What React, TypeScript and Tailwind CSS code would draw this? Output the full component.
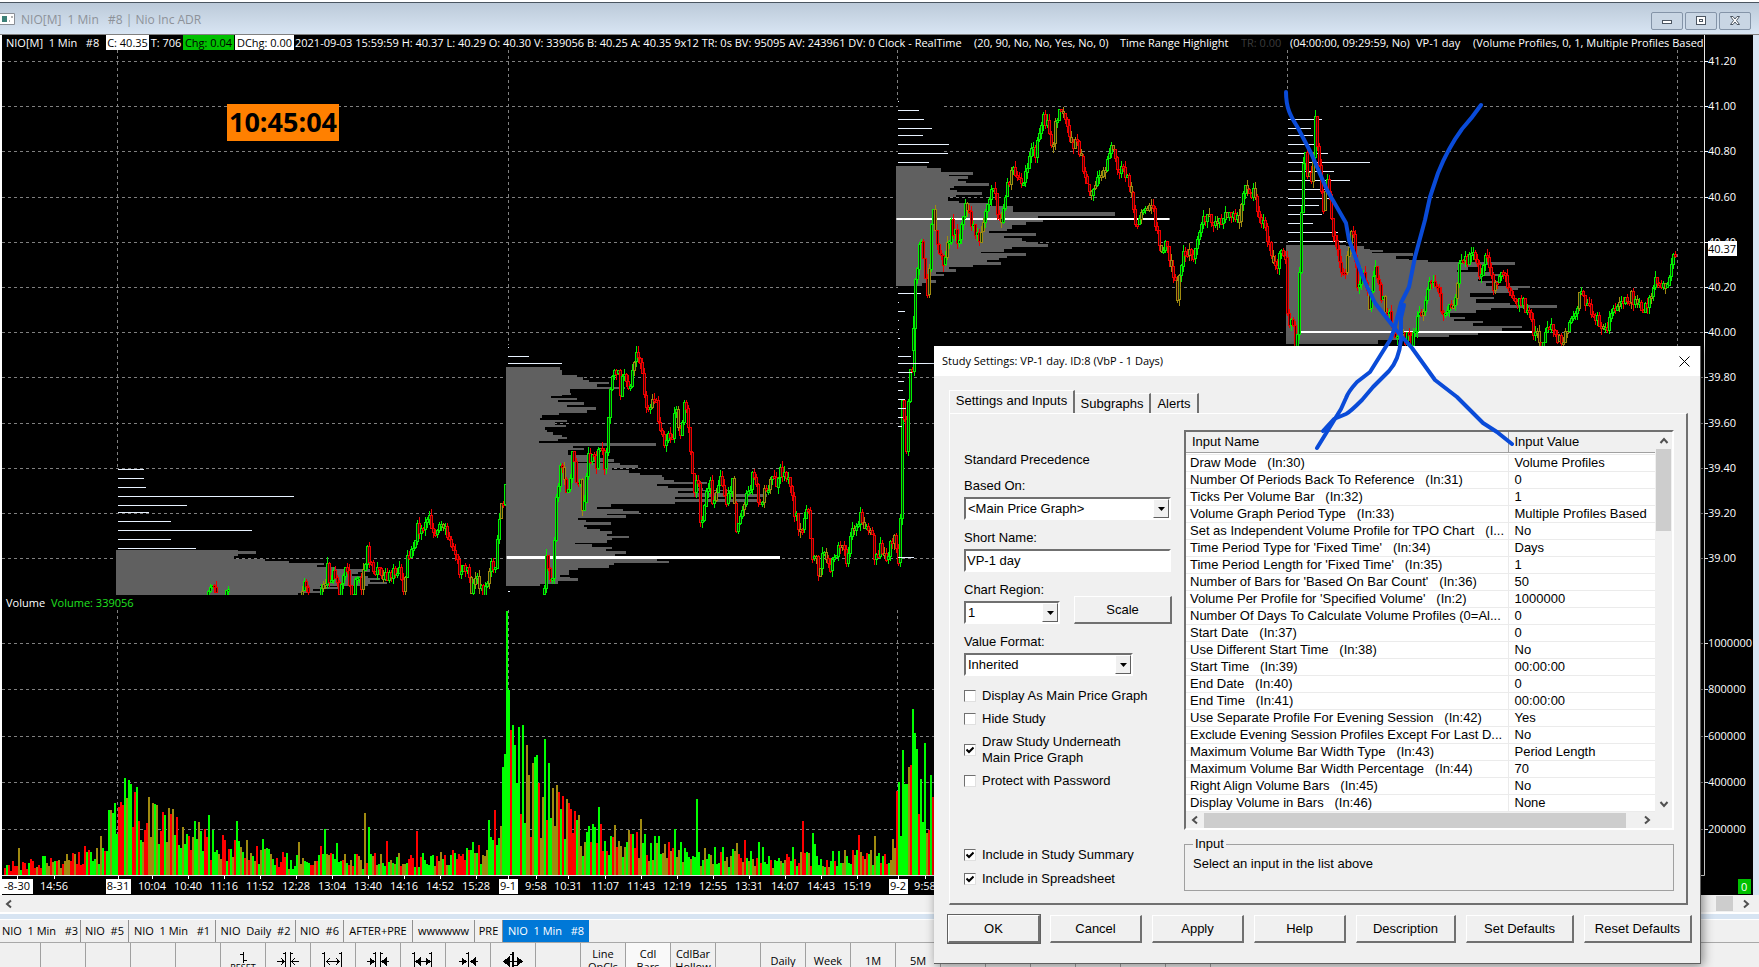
import { useId } from "react";
import type { ReactNode } from "react";

type Point = [number, number];

// Sessions were digitised separately, each one with its own origin and scale
interface Session {
    origin: Point;
    scale: Point;
    base: number;
    profile: Point[];
    profileEnd: number;
    lineStart: number;
    lines: Point[];
    poc?: [number, number, number];
    path: Point[][];
}

const SESSIONS: Session[] = [
    {
        origin: [0, 440],
        scale: [3, 3],
        base: 348,
        profile: [[330, 715], [334, 768], [342, 715], [348, 702], [356, 795], [362, 868], [368, 972], [376, 950], [382, 1005], [388, 1110], [396, 1075], [402, 1055], [408, 1105], [414, 1140], [420, 1110], [426, 1160], [432, 1105], [438, 960], [442, 1020], [448, 940], [452, 960], [460, 893]],
        profileEnd: 465,
        lineStart: 354,
        lines: [[88, 432], [115, 432], [142, 438], [169, 882], [196, 560], [217, 447], [244, 513], [271, 755], [298, 513], [325, 588]],
        path: [
            [[625, 470], [629, 420], [636, 455], [645, 440], [652, 470]],
            [[678, 470], [683, 440], [690, 470]],
            [[905, 470], [914, 440], [922, 458], [926, 470]],
            [[963, 470], [968, 420], [975, 430], [984, 378], [990, 430], [1003, 400], [1022, 460], [1030, 395], [1042, 400], [1055, 470], [1070, 410], [1087, 445], [1093, 370], [1103, 325], [1120, 400], [1135, 375], [1148, 430], [1157, 395], [1168, 410], [1185, 385], [1198, 390], [1213, 445], [1220, 355], [1245, 330], [1253, 260], [1270, 280], [1288, 220], [1308, 300], [1320, 260], [1337, 260], [1352, 330], [1368, 345], [1380, 395], [1402, 375], [1412, 450], [1430, 410], [1452, 468], [1471, 365], [1483, 410], [1492, 300], [1503, 170], [1512, 180], [1520, 95]],
        ],
    },
    {
        origin: [490, 330],
        scale: [3, 3],
        base: 48,
        profile: [[111, 210], [120, 215], [134, 262], [142, 280], [149, 297], [156, 357], [163, 320], [170, 405], [177, 240], [188, 242], [194, 215], [199, 183], [203, 262], [211, 205], [217, 282], [225, 230], [231, 317], [240, 290], [248, 207], [255, 155], [264, 150], [270, 230], [277, 195], [284, 228], [292, 165], [299, 172], [307, 188], [314, 215], [320, 230], [328, 205], [333, 147], [339, 497], [348, 250], [355, 283], [361, 235], [374, 305], [384, 355], [388, 372], [395, 265], [399, 390], [406, 443], [414, 365], [420, 418], [428, 450], [434, 515], [442, 522], [449, 553], [455, 650], [462, 502], [467, 533], [474, 640], [479, 730], [484, 565], [488, 700], [493, 830], [502, 555], [507, 800], [515, 555], [522, 362], [531, 320], [537, 400], [542, 447], [551, 352], [556, 407], [563, 265], [571, 288], [577, 362], [584, 283], [592, 290], [598, 330], [604, 365], [611, 350], [617, 417], [624, 365], [631, 350], [638, 255], [643, 305], [650, 365], [658, 348], [664, 407], [672, 375], [687, 500], [692, 537], [699, 372], [706, 358], [713, 265], [721, 237], [734, 210], [741, 240], [745, 263], [752, 205], [763, 150]],
        profileEnd: 768,
        lineStart: 54,
        lines: [[52, 57], [79, 117], [100, 216], [784, 60]],
        poc: [50, 870, 682],
        path: [
            [[163, 792], [170, 670], [187, 765], [200, 500], [215, 400], [235, 500], [250, 350], [262, 500], [270, 450], [280, 560], [297, 370], [318, 400], [333, 350], [348, 430], [353, 280], [360, 190], [375, 120], [385, 105], [392, 190], [403, 120], [415, 190], [440, 75], [455, 100], [470, 250], [485, 200], [500, 230], [515, 300], [522, 350], [535, 300], [545, 335], [555, 230], [573, 320], [583, 225], [592, 240], [605, 400], [612, 480], [625, 450], [630, 595], [645, 520], [660, 450], [672, 535], [692, 425], [703, 500], [720, 500], [729, 435], [740, 615], [755, 540], [775, 490], [792, 420], [805, 520], [825, 490], [850, 420], [860, 490], [872, 420], [897, 435], [915, 560], [935, 600], [955, 520], [968, 710], [977, 670], [988, 745], [1000, 660], [1022, 715], [1040, 660], [1058, 630], [1070, 715], [1085, 600], [1100, 600], [1115, 545], [1127, 600], [1147, 600], [1155, 690], [1175, 650], [1190, 680], [1212, 620], [1222, 670], [1228, 740], [1234, 460], [1238, 180], [1250, 390], [1260, 100], [1266, 170], [1271, 0], [1275, -40]],
        ],
    },
    {
        origin: [880, 90],
        scale: [1.889, 3],
        base: 30,
        profile: [[228, 88], [233, 115], [246, 175], [254, 130], [259, 167], [266, 148], [273, 163], [279, 205], [288, 140], [294, 133], [300, 145], [306, 193], [314, 143], [321, 128], [333, 150], [340, 207], [347, 252], [366, 443], [378, 298], [390, 307], [397, 275], [404, 250], [416, 240], [423, 205], [430, 294], [438, 235], [445, 268], [452, 275], [457, 298], [463, 317], [471, 250], [478, 235], [485, 190], [490, 275], [498, 240], [504, 225], [510, 202], [517, 228], [525, 175], [532, 130], [538, 143], [545, 105], [551, 120], [558, 95], [570, 105], [578, 80]],
        profileEnd: 588,
        lineStart: 34,
        lines: [[34, 36], [61, 73], [88, 84], [115, 99], [136, 82], [163, 131], [190, 129], [217, 93], [610, 78], [637, 36], [664, 48], [691, 36], [718, 36], [745, 38], [772, 36], [799, 58], [820, 118], [847, 60], [874, 46], [901, 44], [928, 48], [955, 50], [982, 44], [1009, 42], [1402, 64]],
        poc: [31, 547, 386],
        path: [
            [[62, 780], [66, 600], [78, 430], [90, 610], [100, 350], [110, 490], [122, 530], [135, 400], [150, 460], [162, 320], [180, 440], [192, 435], [203, 340], [215, 290], [228, 420], [237, 310], [250, 240], [272, 280], [287, 160], [292, 195], [308, 90], [318, 100], [325, 170], [338, 50], [352, 85], [362, 150], [380, 180], [388, 270], [397, 310], [412, 270], [427, 250], [435, 170], [450, 230], [470, 260], [483, 400], [500, 370], [515, 345], [530, 470], [543, 450], [550, 540], [562, 610], [575, 480], [592, 500], [605, 410], [622, 370], [637, 410], [660, 370], [680, 380], [690, 295], [703, 300], [725, 400], [748, 540], [758, 460], [768, 510]],
        ],
    },
    {
        origin: [880, 90],
        scale: [1.889, 3],
        base: 767,
        profile: [[465, 880], [469, 915], [476, 925], [480, 950], [486, 930], [490, 1007], [497, 975], [506, 1000], [511, 1035], [517, 1200], [524, 1130], [532, 1110], [540, 1090], [547, 1160], [552, 1185], [559, 1135], [568, 1130], [573, 1170], [580, 1145], [587, 1227], [594, 1205], [601, 1190], [608, 1115], [620, 1160], [628, 1125], [640, 1190], [646, 1278], [654, 1155], [661, 1125], [670, 1075], [680, 1105], [687, 1085], [694, 1140], [700, 1120], [707, 1212], [714, 1175], [728, 1130], [735, 1075], [742, 1010], [750, 940]],
        profileEnd: 762,
        lineStart: 771,
        lines: [[88, 834], [115, 815], [136, 818], [163, 825], [190, 847], [217, 925], [244, 858], [271, 887], [298, 840], [325, 858], [346, 830], [373, 835], [400, 817], [427, 865], [454, 880]],
        poc: [790, 1245, 725],
        path: [
            [[768, 500], [770, 700], [780, 690], [784, 762], [789, 740], [795, 400], [802, 130], [807, 280], [812, 250], [816, 280], [822, 85], [830, 230], [836, 370], [845, 260], [857, 440], [877, 560], [893, 400], [902, 600], [912, 540], [925, 640], [935, 520], [945, 600], [955, 650], [975, 730], [990, 740], [1005, 750], [1015, 680], [1025, 660], [1040, 550], [1052, 600], [1065, 670], [1085, 640], [1095, 530], [1120, 500], [1135, 545], [1145, 480], [1160, 600], [1178, 530], [1198, 640], [1215, 630], [1235, 720], [1250, 750], [1265, 710], [1288, 755], [1300, 700], [1318, 650], [1322, 600], [1345, 660], [1370, 715], [1388, 655], [1405, 640], [1420, 620], [1443, 670], [1465, 570], [1485, 595], [1495, 520], [1506, 480]],
        ],
    },
];

const PRICES = ["41.20", "41.00", "40.80", "40.60", "40.40", "40.20", "40.00", "39.80", "39.60", "39.40", "39.20", "39.00"];
const VOLUMES = ["1000000", "800000", "600000", "400000", "200000"];
const SESSION_X = [117, 508, 897, 1287, 1677];

const TIMES: [number, string, boolean?][] = [
    [17, "-8-30", true], [54, "14:56"], [118, "8-31", true], [152, "10:04"], [188, "10:40"], [224, "11:16"], [260, "11:52"],
    [296, "12:28"], [332, "13:04"], [368, "13:40"], [404, "14:16"], [440, "14:52"], [476, "15:28"], [508, "9-1", true],
    [536, "9:58"], [568, "10:31"], [605, "11:07"], [641, "11:43"], [677, "12:19"], [713, "12:55"], [749, "13:31"],
    [785, "14:07"], [821, "14:43"], [857, "15:19"], [898, "9-2", true], [925, "9:58"],
];

// Envelope of the volume histogram: x, height
const VOLUME_ENVELOPE: Point[] = [[4, 12], [60, 18], [105, 24], [113, 75], [130, 82], [150, 62], [180, 48], [205, 44], [240, 28], [290, 18], [400, 18], [440, 20], [480, 30], [498, 55], [505, 160], [515, 140], [530, 105], [560, 70], [590, 48], [640, 38], [700, 26], [780, 18], [850, 24], [885, 24], [893, 40], [900, 110], [915, 115], [934, 90]];
const VOLUME_SPIKES: Point[] = [[108, 65], [118, 68], [128, 95], [136, 88], [148, 78], [172, 66], [208, 60], [236, 54], [262, 36], [324, 46], [364, 62], [368, 48], [416, 44], [507, 264], [509, 185], [513, 150], [518, 148], [522, 150], [526, 130], [532, 112], [537, 120], [544, 136], [548, 112], [556, 90], [566, 76], [598, 68], [640, 56], [674, 46], [696, 76], [736, 32], [802, 54], [812, 42], [896, 84], [902, 125], [912, 166], [914, 142], [924, 132], [930, 100]];

const INPUTS = [
    ["Draw Mode   (In:30)", "Volume Profiles"],
    ["Number Of Periods Back To Reference   (In:31)", "0"],
    ["Ticks Per Volume Bar   (In:32)", "1"],
    ["Volume Graph Period Type   (In:33)", "Multiple Profiles Based"],
    ["Set as Independent Volume Profile for TPO Chart   (I...", "No"],
    ["Time Period Type for 'Fixed Time'   (In:34)", "Days"],
    ["Time Period Length for 'Fixed Time'   (In:35)", "1"],
    ["Number of Bars for 'Based On Bar Count'   (In:36)", "50"],
    ["Volume Per Profile for 'Specified Volume'   (In:2)", "1000000"],
    ["Number Of Days To Calculate Volume Profiles (0=Al...", "0"],
    ["Start Date   (In:37)", "0"],
    ["Use Different Start Time   (In:38)", "No"],
    ["Start Time   (In:39)", "00:00:00"],
    ["End Date   (In:40)", "0"],
    ["End Time   (In:41)", "00:00:00"],
    ["Use Separate Profile For Evening Session   (In:42)", "Yes"],
    ["Exclude Evening Session Profiles Except For Last D...", "No"],
    ["Maximum Volume Bar Width Type   (In:43)", "Period Length"],
    ["Maximum Volume Bar Width Percentage   (In:44)", "70"],
    ["Right Align Volume Bars   (In:45)", "No"],
    ["Display Volume in Bars   (In:46)", "None"],
];

const GREEN = "#00f000";
const RED = "#f00000";
const OLIVE = "#a08a10";

function random(seed: number) {
    let s = seed;
    return () => {
        s = (s * 1664525 + 1013904223) % 4294967296;
        return s / 4294967296;
    };
}

function valueAt(points: Point[], x: number) {
    for (let i = 1; i < points.length; i++) {
        const [x0, y0] = points[i - 1];
        const [x1, y1] = points[i];
        if (x <= x1) return y0 + ((y1 - y0) * (x - x0)) / (x1 - x0 || 1);
    }
    return points[points.length - 1][1];
}

function Candles({ points, seed }: { points: Point[]; seed: number }) {
    const rnd = random(seed);
    const bars: ReactNode[] = [];
    const end = points[points.length - 1][0];
    let prev = points[0][1];
    for (let x = Math.round(points[0][0]) + 0.5; x <= end; x += 2) {
        const next = valueAt(points, x) + (rnd() - 0.5) * 13;
        const up = next < prev;
        const color = rnd() < 0.12 ? OLIVE : up ? GREEN : RED;
        const top = Math.round(Math.min(prev, next)) + 0.5;
        const height = Math.max(2, Math.round(Math.abs(next - prev)));
        bars.push(
            <path key={x} d={`M${x} ${top - rnd() * 7}V${top}M${x} ${top + height}v${rnd() * 7}`} stroke={color} />,
            <rect key={`b${x}`} x={x - 1} y={top} width={2} height={height} stroke={color} fill={up ? "#063806" : "#400606"} />
        );
        prev = next;
    }
    return <g shapeRendering="crispEdges">{bars}</g>;
}

function SessionPlot({ session, index }: { session: Session; index: number }) {
    const px = (x: number) => session.origin[0] + x / session.scale[0];
    const py = (y: number) => session.origin[1] + y / session.scale[1];
    const left = px(session.base);
    const { profile } = session;

    return (
        <g>
            {profile.map(([y, x], i) => {
                const next = i + 1 < profile.length ? profile[i + 1][0] : session.profileEnd;
                return <rect key={y} x={left} y={py(y)} width={px(x) - left} height={py(next) - py(y)} fill="#606060" shapeRendering="crispEdges" />;
            })}
            {session.lines.map(([y, x]) => (
                <rect key={y} x={px(session.lineStart)} y={Math.floor(py(y))} width={Math.max(1, px(x) - px(session.lineStart))} height={1} fill="#e8f2ff" shapeRendering="crispEdges" />
            ))}
            {session.poc && (
                <rect x={px(session.poc[0])} y={Math.round(py(session.poc[2])) - 1} width={px(session.poc[1]) - px(session.poc[0])} height={index === 1 ? 3 : 2} fill="#fff" />
            )}
            {session.path.map((path, i) => (
                <Candles key={i} seed={index * 31 + i * 7 + 5} points={path.map(([x, y]) => [px(x), py(y)] as Point)} />
            ))}
        </g>
    );
}

function VolumeBars() {
    const rnd = random(77);
    const bars: ReactNode[] = [];
    for (let x = 4; x < 938; x += 2) {
        const env = valueAt(VOLUME_ENVELOPE, x);
        const spike = VOLUME_SPIKES.find(([sx]) => sx === x || sx === x + 1);
        const h = spike ? spike[1] : env * (0.35 + rnd() * 0.85) + (rnd() < 0.08 ? 12 : 0);
        const c = rnd();
        const color = c < 0.46 || (spike && spike[1] > 140) ? "#00ff00" : c < 0.74 ? "#ff0000" : OLIVE;
        bars.push(<rect key={x} x={x} y={875 - h} width={2} height={h} fill={color} />);
    }
    return <g shapeRendering="crispEdges">{bars}</g>;
}

function Chart() {
    return (
        <svg className="block h-full w-full font-['Open_Sans',sans-serif] text-[11px]" viewBox="2 35 1751 860" preserveAspectRatio="xMinYMin slice" role="img" aria-label="NIO 1 minute chart">
            <defs>
                <clipPath id="price">
                    <rect x="2" y="50" width="1702" height="545" />
                </clipPath>
            </defs>
            <rect x="2" y="35" width="1751" height="860" fill="#000" />
            <g stroke="#808080" strokeDasharray="3 3" shapeRendering="crispEdges">
                {PRICES.map((p, i) => (
                    <line key={p} x1="2" x2="1704" y1={Math.round(61 + i * 45.2) + 0.5} y2={Math.round(61 + i * 45.2) + 0.5} />
                ))}
                {VOLUMES.map((v, i) => (
                    <line key={v} x1="2" x2="1704" y1={Math.round(643 + i * 46.4) + 0.5} y2={Math.round(643 + i * 46.4) + 0.5} />
                ))}
                {SESSION_X.map((x, i) => (
                    <g key={x}>
                        <line x1={x + 0.5} x2={x + 0.5} y1="50" y2={[467, 345, 100, 90, 595][i]} />
                        <line x1={x + 0.5} x2={x + 0.5} y1="610" y2="875" />
                    </g>
                ))}
            </g>
            {/* Grid is blanked beside the thin profile rows */}
            <path d="M898 95H944V340H898ZM1288 95H1338V245H1288Z" />
            <g clipPath="url(#price)">
                {SESSIONS.map((s, i) => (
                    <SessionPlot key={i} session={s} index={i} />
                ))}
            </g>
            <VolumeBars />

            {/* Axes */}
            <path d="M2 875.5H1704.5V35" stroke="#e8e8e8" fill="none" />
            {PRICES.map((p, i) => (
                <g key={p} fill="#fff">
                    <rect x="1704" y={Math.round(61 + i * 45.2)} width="4" height="1" />
                    <text x="1708" y={Math.round(65 + i * 45.2)}>{p}</text>
                </g>
            ))}
            {VOLUMES.map((v, i) => (
                <g key={v} fill="#fff">
                    <rect x="1704" y={Math.round(643 + i * 46.4)} width="4" height="1" />
                    <text x="1708" y={Math.round(647 + i * 46.4)}>{v}</text>
                </g>
            ))}
            <rect x="1708" y="241" width="29" height="15" fill="#fff" />
            <text x="1708" y="253">40.37</text>
            <rect x="1738" y="879" width="13" height="15" fill="#00c000" />
            <text x="1741" y="891" fill="#fff">0</text>
            {TIMES.map(([x, label, boxed]) => (
                <g key={x}>
                    <rect x={x} y="876" width="1" height="3" fill="#fff" />
                    {boxed && <rect x={x - label.length * 3} y="879" width={label.length * 6 + 1} height="15" fill="#fff" />}
                    <text x={x} y="890" textAnchor="middle" fill={boxed ? "#000" : "#fff"}>{label}</text>
                </g>
            ))}
        </svg>
    );
}

function StatusLine() {
    return (
        <div className="absolute top-0 left-0 flex h-[15px] w-[1702px] items-center overflow-hidden bg-black pl-1 text-[11px] leading-[15px] whitespace-pre text-white">
            <span className="w-[100px] shrink-0">NIO[M]  1 Min   #8</span>
            <span className="w-[43px] shrink-0 bg-white text-center text-black">C: 40.35</span>
            <span className="w-[34px] shrink-0 text-center">T: 706</span>
            <span className="w-[51px] shrink-0 bg-[#00c000] text-center text-black">Chg: 0.04</span>
            <span className="ml-px w-[59px] shrink-0 bg-white text-center text-black">DChg: 0.00</span>
            <span className="w-[584px] shrink-0 pl-px">2021-09-03 15:59:59 H: 40.37 L: 40.29 O: 40.30 V: 339056 B: 40.25 A: 40.35 9x12 TR: 0s BV: 95095 AV: 243961 DV: 0</span>
            <span className="w-[96px] shrink-0">Clock - RealTime</span>
            <span className="w-[146px] shrink-0">(20, 90, No, No, Yes, No, 0)</span>
            <span className="w-[121px] shrink-0">Time Range Highlight</span>
            <span className="w-[49px] shrink-0 text-[#3c3c3c]">TR: 0.00</span>
            <span className="w-[126px] shrink-0">(04:00:00, 09:29:59, No)</span>
            <span className="w-[57px] shrink-0">VP-1 day</span>
            <span>(Volume Profiles, 0, 1, Multiple Profiles Based</span>
        </div>
    );
}

function WindowButton({ label, children }: { label: string; children: ReactNode }) {
    return (
        <button aria-label={label} className="flex h-[18px] w-8 items-center justify-center rounded-xs border border-[#8494a8] bg-[#c9d6e4]">
            <svg width="14" height="12" viewBox="0 0 14 12" fill="#fff" stroke="#4c5662">{children}</svg>
        </button>
    );
}

function ToolIcon({ kind }: { kind: number }) {
    return (
        <svg width="24" height="20" viewBox="0 0 24 20" fill="none" stroke="#000" strokeWidth="1" shapeRendering="crispEdges">
            {kind === 0 && <path d="M12.5 1V12M9 3.5H12M13 9.5H16" />}
            {kind === 1 && <path d="M9.5 1V18M14.5 1V18M7 2.5H9M15 2.5H17M1 10.5H8M16 10.5H23M5 7L8 10.5L5 14M19 7L16 10.5L19 14" />}
            {kind === 2 && <path d="M3.5 1V18M20.5 1V18M1 2.5H3M18 2.5H20M6 10.5H18M9 7L6 10.5L9 14M15 7L18 10.5L15 14" />}
            {kind === 3 && <path d="M9.5 1V18M14.5 1V18M7 2.5H9M15 2.5H17M1 10.5H8M16 10.5H23M4 7L8 10.5L4 14ZM20 7L16 10.5L20 14Z" fill="#000" />}
            {kind === 4 && <path d="M3.5 1V18M20.5 1V18M1 2.5H3M18 2.5H20M6 10.5H18M9 7L5 10.5L9 14ZM15 7L19 10.5L15 14Z" fill="#000" />}
            {kind === 5 && <path d="M12.5 1V18M10 2.5H12M3 10.5H10M15 10.5H22M6 7L10 10.5L6 14ZM19 7L15 10.5L19 14Z" fill="#000" />}
            {kind === 6 && <path d="M12.5 1V18M11.5 1V18M9 3.5H12M13 14.5H16M4 10.5H20M8 6L3 10.5L8 15ZM16 6L21 10.5L16 15Z" fill="#000" />}
        </svg>
    );
}

const TABS = [
    { label: "NIO  1 Min   #3", width: "w-[81px]" },
    { label: "NIO  #5", width: "w-[48px]" },
    { label: "NIO  1 Min   #1", width: "w-[87px]" },
    { label: "NIO  Daily  #2", width: "w-[80px]" },
    { label: "NIO  #6", width: "w-[48px]" },
    { label: "AFTER+PRE", width: "w-[69px]" },
    { label: "wwwwww", width: "w-[62px]" },
    { label: "PRE", width: "w-[28px]" },
];

const TOOLS: (string | number)[] = [
    "", "", "", "", "", 0, 1, 2, 3, 4, 5, 6, "", "Line\nOpCls", "Cdl\nBars", "CdlBar\nHollow", "",
    "Daily", "Week", "1M", "5M", "", "", "", "", "Move", "Range",
];

function BottomBars() {
    return (
        <>
            <div className="flex h-[17px] shrink-0 items-center justify-between bg-[#f0f0f0] pr-2 pl-1 text-[#555]">
                <Arrow direction="left" />
                <div className="flex h-full items-center gap-2">
                    <div className="h-[15px] w-[17px] bg-[#cdcdcd]" />
                    <Arrow direction="right" />
                </div>
            </div>
            <div className="h-2 shrink-0 border-t-2 border-b border-white bg-[#d7e4f2]" />
            <div className="flex h-[23px] shrink-0 items-start border-b border-[#a8a8a8] bg-[#f0f0f0] text-[11px] whitespace-pre">
                {TABS.map((t) => (
                    <button key={t.label} className={`${t.width} h-[22px] shrink-0 overflow-hidden border-r border-[#909090] text-center`}>{t.label}</button>
                ))}
                <button className="h-[22px] w-[86px] bg-[#0078d7] text-center text-white">NIO  1 Min   #8</button>
            </div>
            <div className="flex h-6 shrink-0 overflow-hidden bg-[#f0f0f0] text-[11px] leading-[13px]">
                {TOOLS.map((t, i) => (
                    <button
                        key={i}
                        className={`flex h-[34px] shrink-0 flex-col items-center border-r border-[#a0a0a0] whitespace-pre ${i === 0 ? "w-[41px]" : "w-[45px]"} ${t === "Cdl\nBars" ? "bg-[#f9f9f9]" : ""} ${typeof t === "number" ? "justify-start pt-2" : t === "Move" || t === "Range" ? "justify-end" : "justify-center"}`}
                    >
                        {typeof t === "number" ? <ToolIcon kind={t} /> : t}
                        {t === 0 && <span className="-mt-2 text-[9px] leading-[9px]">RESET</span>}
                    </button>
                ))}
            </div>
        </>
    );
}

function Arrow({ direction }: { direction: "left" | "right" | "up" | "down" }) {
    const d = {
        left: "M7 1.5L3 5L7 8.5",
        right: "M3 1.5L7 5L3 8.5",
        up: "M1.5 7L5 3L8.5 7",
        down: "M1.5 3L5 7L8.5 3",
    }[direction];
    return (
        <svg width="10" height="10" viewBox="0 0 10 10" fill="none" stroke="#505050" strokeWidth="2">
            <path d={d} />
        </svg>
    );
}

function Select({ label, value, width }: { label: string; value: string; width: string }) {
    const id = useId();
    return (
        <div className="flex flex-col">
            <label htmlFor={id} className="h-[23px] leading-[23px]">{label}</label>
            <div className={`relative h-[23px] border-2 border-t-[#707070] border-r-white border-b-white border-l-[#707070] bg-white ${width}`}>
                <select id={id} className="block h-full w-full appearance-none pl-0.5 leading-[19px] outline-none">
                    <option>{value}</option>
                </select>
                <span className="pointer-events-none absolute top-0 right-0 flex h-[19px] w-4 items-center justify-center border border-t-white border-r-[#606060] border-b-[#606060] border-l-white bg-[#f0f0f0]">
                    <svg width="7" height="4" viewBox="0 0 7 4"><path d="M0 0H7L3.5 4Z" /></svg>
                </span>
            </div>
        </div>
    );
}

function Checkbox({ checked, children }: { checked?: boolean; children: ReactNode }) {
    return (
        <label className="flex items-center gap-1.5">
            <span className="grid size-3 place-items-center">
                <input type="checkbox" defaultChecked={checked} className="peer col-start-1 row-start-1 size-3 appearance-none border border-t-[#707070] border-r-[#e0e0e0] border-b-[#e0e0e0] border-l-[#707070] bg-white" />
                <svg className="pointer-events-none invisible col-start-1 row-start-1 peer-checked:visible" width="8" height="8" viewBox="0 0 8 8" fill="none" stroke="#000" strokeWidth="2">
                    <path d="M0.5 3.5L3 6L7.5 1.5" />
                </svg>
            </span>
            <span>{children}</span>
        </label>
    );
}

function Button({ children, className }: { children: ReactNode; className: string }) {
    return (
        <button className={`h-7 shrink-0 border border-t-white border-r-2 border-r-[#707070] border-b-2 border-b-[#707070] border-l-white text-center ${className}`}>{children}</button>
    );
}

function InputList() {
    return (
        <div className="h-[400px] border-2 border-t-[#707070] border-r-white border-b-white border-l-[#707070] bg-white">
            <div className="flex h-[380px]">
                <table className="w-full table-fixed border-collapse text-left whitespace-pre">
                    <colgroup>
                        <col className="w-[322px]" />
                        <col />
                    </colgroup>
                    <thead className="bg-[#f0f0f0]">
                        <tr className="h-5 border-b border-[#a0a0a0] leading-[19px]">
                            <th className="border-r border-[#a0a0a0] p-0 pl-1.5 font-normal">Input Name</th>
                            <th className="p-0 pl-1.5 font-normal">Input Value</th>
                        </tr>
                    </thead>
                    <tbody>
                        <tr className="h-0.5 border-b border-[#ebebeb]"><td colSpan={2} className="p-0" /></tr>
                        {INPUTS.map(([name, value]) => (
                            <tr key={name} className="h-[17px] border-b border-[#ebebeb] leading-4">
                                <td className="border-r border-[#ebebeb] p-0 pl-1">{name}</td>
                                <td className="p-0 pl-1.5">{value}</td>
                            </tr>
                        ))}
                    </tbody>
                </table>
                <div className="flex w-[17px] shrink-0 flex-col items-center bg-[#f0f0f0]">
                    <div className="flex h-[17px] items-center"><Arrow direction="up" /></div>
                    <div className="h-[82px] w-[15px] bg-[#cdcdcd]" />
                    <div className="mt-auto flex h-[17px] items-center"><Arrow direction="down" /></div>
                </div>
            </div>
            <div className="flex h-4 items-center bg-[#f0f0f0] pl-1">
                <Arrow direction="left" />
                <div className="ml-1 h-[15px] w-[422px] bg-[#cdcdcd]" />
                <div className="ml-4"><Arrow direction="right" /></div>
            </div>
        </div>
    );
}

function StudySettings() {
    return (
        <section role="dialog" aria-label="Study Settings" className="absolute top-[346px] left-[934px] w-[767px] border-r border-b border-[#606060] bg-[#f0f0f0] font-['Liberation_Sans',sans-serif] text-[13px] text-black shadow-[2px_2px_10px_rgba(0,0,0,0.45)]">
            <header className="flex h-[30px] items-center justify-between bg-white pr-2.5 pl-2">
                <h2 className="font-['Open_Sans',sans-serif] text-[11px]">Study Settings: VP-1 day. ID:8 (VbP - 1 Days)</h2>
                <button aria-label="Close">
                    <svg width="11" height="11" viewBox="0 0 11 11" stroke="#000"><path d="M0.5 0.5L10.5 10.5M10.5 0.5L0.5 10.5" /></svg>
                </button>
            </header>

            <div className="pt-[15px] pr-3 pl-[15px]">
                <div role="tablist" className="flex h-[22px] items-end">
                    <button role="tab" aria-selected="true" className="h-[23px] w-[126px] border-t border-r-2 border-l border-t-white border-r-[#707070] border-l-white pb-0.5 text-center">Settings and Inputs</button>
                    <button role="tab" className="h-5 w-[76px] border-t border-r-2 border-t-white border-r-[#707070] text-center">Subgraphs</button>
                    <button role="tab" className="h-5 w-12 border-t border-r-2 border-t-white border-r-[#707070] text-center">Alerts</button>
                </div>

                <div className="flex border-t border-r-2 border-b-2 border-l border-t-white border-r-[#707070] border-b-[#707070] border-l-white pt-4 pr-3 pb-3 pl-3.5">
                    <form className="flex w-[220px] shrink-0 flex-col" onSubmit={(e) => e.preventDefault()}>
                        <p className="mt-[22px] mb-1.5 h-4 leading-4">Standard Precedence</p>
                        <Select label="Based On:" value="<Main Price Graph>" width="w-[207px]" />
                        <label htmlFor="short" className="mt-1.5 h-[23px] leading-[23px]">Short Name:</label>
                        <input id="short" defaultValue="VP-1 day" className="h-[23px] w-[207px] border-2 border-t-[#707070] border-r-white border-b-white border-l-[#707070] bg-white pl-px outline-none" />
                        <div className="mt-1.5 flex items-end gap-3.5">
                            <Select label="Chart Region:" value="1" width="w-24" />
                            <Button className="w-[98px]">Scale</Button>
                        </div>
                        <div className="mt-1.5">
                            <Select label="Value Format:" value="Inherited" width="w-[169px]" />
                        </div>
                        <div className="mt-3 flex flex-col gap-[7px] leading-4">
                            <Checkbox>Display As Main Price Graph</Checkbox>
                            <Checkbox>Hide Study</Checkbox>
                            <Checkbox checked>Draw Study Underneath<br />Main Price Graph</Checkbox>
                            <Checkbox>Protect with Password</Checkbox>
                        </div>
                        <div className="mt-auto mb-1 flex flex-col gap-2 leading-4">
                            <Checkbox checked>Include in Study Summary</Checkbox>
                            <Checkbox checked>Include in Spreadsheet</Checkbox>
                        </div>
                    </form>

                    <div className="flex min-w-0 flex-1 flex-col">
                        <InputList />
                        <fieldset className="mt-1.5 h-[55px] border border-[#a0a0a0] px-2">
                            <legend className="px-0.5 leading-4">Input</legend>
                            <p className="pt-0.5">Select an input in the list above</p>
                        </fieldset>
                    </div>
                </div>
            </div>

            <div className="flex gap-2.5 pt-2.5 pb-5 pl-3.5">
                <Button className="w-[92px] outline outline-[#606060]">OK</Button>
                <Button className="w-[92px]">Cancel</Button>
                <Button className="w-[92px]">Apply</Button>
                <Button className="w-[92px]">Help</Button>
                <Button className="w-[100px]">Description</Button>
                <Button className="w-[108px]">Set Defaults</Button>
                <Button className="w-[108px]">Reset Defaults</Button>
            </div>
        </section>
    );
}

// Freehand marks, drawn over the chart and the dialog
function Scribble() {
    return (
        <svg className="pointer-events-none absolute top-20 left-[1270px]" width="260" height="380" viewBox="1270 80 260 380" fill="none" stroke="#0a4bd8" strokeWidth="4" strokeLinecap="round" strokeLinejoin="round">
            <path d="M1286 92C1286 110 1292 118 1298 128L1311 153L1327 190L1346 223L1349 240L1364 280L1375 303L1396 330L1412 348L1435 380L1457 397L1483 423L1497 432L1512 444" />
            <path d="M1481 105Q1472 118 1462 129Q1448 148 1438 173L1430 197L1425 220L1415 257L1409 287L1401 303L1394 330L1390 340L1370 372L1357 382Q1348 392 1346 398L1341 409L1317 448" />
            <path d="M1404 305L1401 318V340Q1399 360 1389 371L1373 387L1362 400Q1350 412 1346 414L1334 419L1323 431" />
        </svg>
    );
}

export default function App() {
    return (
        <div className="relative flex h-screen flex-col overflow-hidden bg-[#f0f0f0] font-['Open_Sans',sans-serif] text-black">
            <div className="h-[3px] shrink-0 border-b border-[#4a5560] bg-white" />
            <div className="flex h-8 shrink-0 items-center justify-between border-b border-[#808080] bg-linear-to-b from-[#bccad9] to-[#d8e5f3] pr-2 text-[#8d9299]">
                <div className="flex items-center gap-1.5 whitespace-pre">
                    <svg width="15" height="12" viewBox="0 0 15 12">
                        <path d="M0 0.5H14.5V11.5H0" fill="#fff" stroke="#8a8f96" />
                        <rect x="2" y="3" width="5" height="6" fill="#3c8078" />
                        <path d="M9 8H10M12 3V5" stroke="#666" />
                    </svg>
                    <h1 className="pt-0.5 text-[12px]">NIO[M]  1 Min   #8 | Nio Inc ADR</h1>
                </div>
                <div className="mt-1 flex gap-0.5">
                    <WindowButton label="Minimize"><rect x="2.5" y="5.5" width="9" height="3" /></WindowButton>
                    <WindowButton label="Restore"><rect x="2.5" y="1.5" width="9" height="8" /><rect x="5.5" y="4.5" width="3" height="2" /></WindowButton>
                    <WindowButton label="Close"><path d="M2.5 1.5H5L7 4L9 1.5H11.5L8.5 5.5L11.5 9.5H9L7 7L5 9.5H2.5L5.5 5.5Z" /></WindowButton>
                </div>
            </div>

            <main className="relative min-h-0 flex-1 border-r-6 border-l-2 border-r-[#d7e4f2] border-l-white bg-black">
                <Chart />
                <StatusLine />
                <time className="absolute top-[69px] left-[225px] flex h-[37px] w-28 items-center justify-center bg-[#ff8000] text-[27px] font-bold text-black">10:45:04</time>
                <p className="absolute top-[560px] left-1 flex h-4 items-center gap-1.5 text-[11px] text-white">
                    Volume <span className="text-[#20e020]">Volume: 339056</span>
                </p>
            </main>

            <BottomBars />
            <StudySettings />
            <Scribble />
        </div>
    );
}
